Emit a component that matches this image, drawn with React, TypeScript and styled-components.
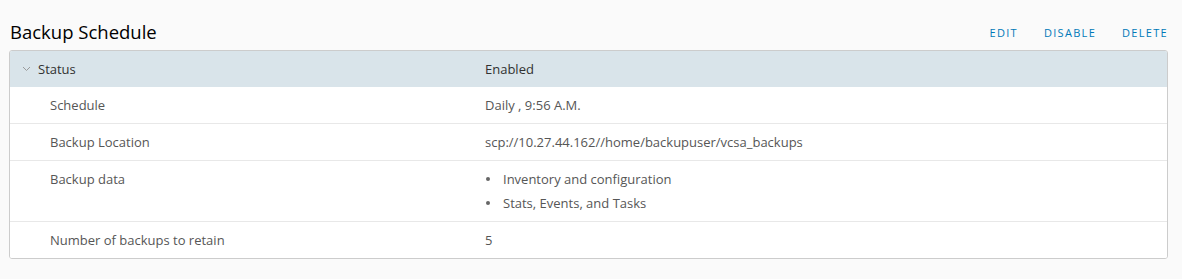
import styled, { createGlobalStyle } from 'styled-components'

const GlobalStyle = createGlobalStyle`
  html, body {
    margin: 0;
    background: #fafafa;
    font-family: "Open Sans", "Liberation Sans", sans-serif;
  }
`

const Page = styled.div`
  padding: 20px 14px 0 9px;
`

const Header = styled.div`
  display: flex;
  align-items: center;
  justify-content: space-between;
  height: 24px;
  margin-bottom: 6px;
`

const Title = styled.h2`
  margin: 0 0 0 1px;
  font-size: 18.5px;
  font-weight: 400;
  line-height: 24px;
  color: #000;
`

const Actions = styled.div`
  display: flex;
  gap: 26px;
  padding-right: 0;
`

const ActionLink = styled.a`
  font-size: 11px;
  letter-spacing: 1.3px;
  color: #0079b8;
  text-transform: uppercase;
  cursor: pointer;
`

const Card = styled.div`
  background: #fff;
  border: 1px solid #ccc;
  border-radius: 3px;
  overflow: hidden;
`

const Row = styled.div<{ $head?: boolean }>`
  display: grid;
  grid-template-columns: 475px 1fr;
  padding: 11px 0;
  font-size: 13px;
  line-height: 14px;
  background: ${p => (p.$head ? '#d9e4ea' : '#fff')};
  color: ${p => (p.$head ? '#313131' : '#565656')};
  & + & + & {
    border-top: 1px solid #e8e8e8;
  }
`

const Label = styled.div<{ $head?: boolean }>`
  display: flex;
  align-items: ${p => (p.$head ? 'center' : 'flex-start')};
  gap: 7px;
  padding-left: ${p => (p.$head ? '12px' : '40px')};
`

const Value = styled.div`
  color: inherit;
`

const List = styled.ul`
  margin: 0;
  padding: 0;
  list-style: none;
  display: flex;
  flex-direction: column;
  gap: 10px;
`

const Item = styled.li`
  position: relative;
  padding-left: 18px;
  &::before {
    content: '';
    position: absolute;
    left: 1px;
    top: 5px;
    width: 4px;
    height: 4px;
    border-radius: 50%;
    background: #666;
  }
`

const Chevron = () => (
  <svg width="9" height="6" viewBox="0 0 9 6">
    <path d="M1 1 L4.5 4.5 L8 1" fill="none" stroke="#9a9a9a" strokeWidth="1" />
  </svg>
)

const rows = [
  { label: 'Schedule', value: 'Daily , 9:56 A.M.' },
  { label: 'Backup Location', value: 'scp://10.27.44.162//home/backupuser/vcsa_backups' },
  { label: 'Backup data', items: ['Inventory and configuration', 'Stats, Events, and Tasks'] },
  { label: 'Number of backups to retain', value: '5' },
]

const App = () => (
  <>
    <GlobalStyle />
    <Page>
      <Header>
        <Title>Backup Schedule</Title>
        <Actions>
          <ActionLink>Edit</ActionLink>
          <ActionLink>Disable</ActionLink>
          <ActionLink>Delete</ActionLink>
        </Actions>
      </Header>
      <Card>
        <Row $head>
          <Label $head>
            <Chevron />
            Status
          </Label>
          <Value>Enabled</Value>
        </Row>
        {rows.map(r => (
          <Row key={r.label}>
            <Label>{r.label}</Label>
            <Value>
              {r.items ? (
                <List>
                  {r.items.map(i => (
                    <Item key={i}>{i}</Item>
                  ))}
                </List>
              ) : (
                r.value
              )}
            </Value>
          </Row>
        ))}
      </Card>
    </Page>
  </>
)

export default App
